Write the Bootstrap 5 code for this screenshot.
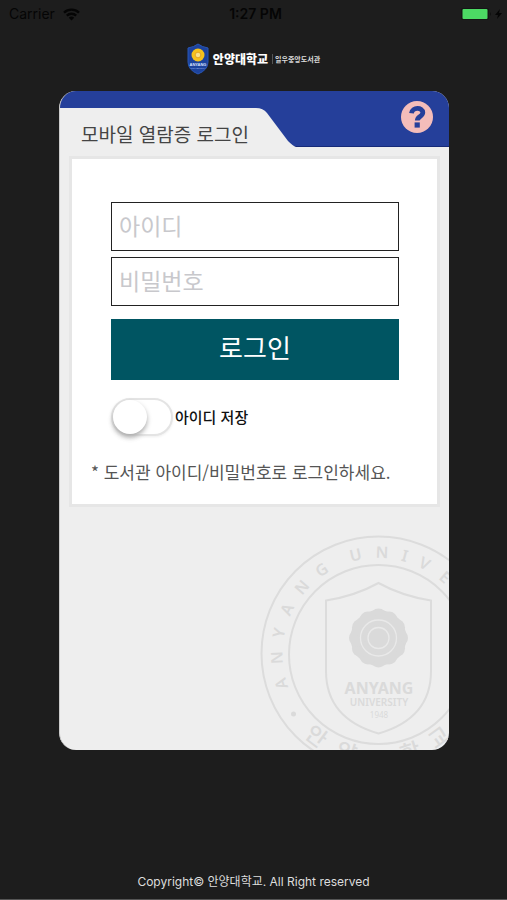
<!DOCTYPE html>
<html lang="ko">
<head>
<meta charset="utf-8">
<meta name="viewport" content="width=device-width, initial-scale=1">
<title>모바일 열람증 로그인</title>
<link href="https://cdn.jsdelivr.net/npm/bootstrap@5.3.0/dist/css/bootstrap.min.css" rel="stylesheet">
<style>
body{background:#1d1d1d;font-family:"Noto Sans","Noto Sans CJK KR",sans-serif;border-bottom:1px solid #555}
.statusbar{height:28px;padding:0 5px 0 9px;font:14px/28px Inter,sans-serif;color:#050505}
.statusbar .clock{font-weight:600;font-size:14px}
.brand{padding:15px 0 16px}
.brand .univ{font:900 12px/16px "Noto Sans CJK KR",sans-serif;color:#fff}
.brand .lib{font:700 7px/10px "Noto Sans CJK KR",sans-serif;color:#ddd;border-left:1px solid #555;padding-left:2px}
.frame{padding:0 58px 0 59px}
.pass{background:#eee;border-radius:17px;overflow:hidden;border-left:1px solid #ccc}
.pass-head{background:#253f9a;height:56px;border-bottom:1px solid #162a78}
.tab{background:#eee;margin-top:17px;height:39px;padding-left:21px;width:196px;white-space:nowrap}
.tab h1{font:400 19px/24px "Noto Sans CJK KR",sans-serif;color:#444;margin:0;padding-top:14px}
.slope{margin-top:17px}
.help{background:none;border:0;padding:10px 16px 0 0}
.panel{background:#fff;border:3px solid #e6e6e6;margin:9px 9px 0;padding:43px 38px 20px 39px}
.field{height:49px;border:1px solid #222;border-radius:0;font:23px/36px "Noto Sans CJK KR",sans-serif;padding:0 7px 4px;margin-bottom:6px}
.field::placeholder{color:#c8c8cc;opacity:1}
.login{height:61px;border-radius:0;background:#005562;color:#fff;font:26px/36px "Noto Sans CJK KR",sans-serif;margin-top:13px;border:0;padding:0 0 6px}
.login:hover{background:#00454f;color:#fff}
.save{margin-top:18px;gap:2px;font:500 15px/20px "Noto Sans CJK KR",sans-serif;color:#111}
.switch{appearance:none;width:62px;height:38px;border:2px solid #e4e4e4;border-radius:19px;background:#fff;margin:0;filter:drop-shadow(0 1px 1px #eee)}
.switch::before{content:"";display:block;width:34px;height:34px;border-radius:50%;background:#fff;box-shadow:0 3px 5px #aaa}
.switch:checked{background:#4cd964}
.switch:checked::before{margin-left:24px}
.note{font:17px/24px "Noto Sans CJK KR",sans-serif;color:#555;margin:24px -20px 0;white-space:nowrap}
.seal{margin-top:27px}
.copy{font:12px/18px Inter,"Noto Sans CJK KR",sans-serif;color:#ddd;padding-bottom:8px}
</style>
<script src="https://cdn.jsdelivr.net/npm/bootstrap@5.3.0/dist/js/bootstrap.bundle.min.js"></script>
</head>
<body class="d-flex flex-column min-vh-100">
<div class="statusbar row g-0 w-100">
  <div class="col d-flex align-items-center gap-2"><span>Carrier</span>
    <svg width="17" height="13" viewBox="0 0 17 13" fill="none" stroke="#050505" stroke-width="2.4"><path d="M1 4.6a11 11 0 0 1 15 0M3.8 7.6a7 7 0 0 1 9.4 0"/><path d="M8.500 12.500 5.800 9.700a4 4 0 0 1 5.400 0z" fill="#050505" stroke="none"/></svg>
  </div>
  <div class="col text-center clock">1:27 PM</div>
  <div class="col d-flex justify-content-end align-items-center">
    <svg width="42" height="14" viewBox="0 0 42 14"><rect x="1" y="1" width="28" height="12" rx="2" fill="#151515"/><rect x="2.500" y="2" width="25" height="10" rx="1" fill="#4cd964"/><path d="M30 5v4q2-2 0-4z" fill="#111"/><path d="m40 2-5 6h3l-1 4 5-6h-3z" fill="#050505"/></svg>
  </div>
</div>
<header class="brand d-flex justify-content-center align-items-center">
  <svg width="22" height="32" viewBox="0 0 22 32"><path d="M11 1Q15 4 21 5v14q0 8-10 12Q1 27 1 19V5q6-1 10-4z" fill="#1d439d" stroke="#2956b5"/><circle cx="11" cy="12" r="6.500" fill="#f5c21d"/><circle cx="11" cy="12" r="2.800" fill="#f7e28a" stroke="#e19a19" stroke-width=".8"/><text x="11" y="23" text-anchor="middle" font-family="Liberation Sans" font-weight="700" font-size="4" fill="#dbe4ff">ANYANG</text><text x="11" y="26" text-anchor="middle" font-family="Liberation Sans" font-size="2.500" fill="#9fb4e8">UNIVERSITY</text></svg>
  <span class="univ ms-1">안양대학교</span><span class="lib ms-1">일우중앙도서관</span>
</header>
<main class="frame">
  <div class="pass d-flex flex-column">
    <div class="pass-head d-flex">
      <div class="tab"><h1>모바일 열람증 로그인</h1></div>
      <svg class="slope flex-shrink-0" width="42" height="39" viewBox="0 0 42 39"><path d="M0 0Q7 0 11 5L32 33q5 5 8 6H0z" fill="#eee"/></svg>
      <button class="help ms-auto align-self-start" type="button" aria-label="도움말">
        <svg class="d-block" width="32" height="32" viewBox="0 0 32 32"><circle cx="16" cy="16" r="16" fill="#f4bdba"/><path d="M10.500 12.200C11.200 5.800 21.800 6.200 21.800 11.500C21.800 15.600 16.300 15.300 16.300 19.500" fill="none" stroke="#253f9a" stroke-width="4.800"/><rect x="13.600" y="21.400" width="5.200" height="5.200" fill="#253f9a"/></svg>
      </button>
    </div>
    <form class="panel">
      <label class="visually-hidden" for="uid">아이디</label>
      <input class="form-control field" id="uid" type="text" placeholder="아이디">
      <label class="visually-hidden" for="upw">비밀번호</label>
      <input class="form-control field mb-0" id="upw" type="password" placeholder="비밀번호">
      <button class="btn login w-100" type="submit">로그인</button>
      <div class="save d-flex align-items-center"><input class="switch" type="checkbox" role="switch" id="keep"><label for="keep">아이디 저장</label></div>
      <p class="note">* 도서관 아이디/비밀번호로 로그인하세요.</p>
    </form>
    <svg class="seal align-self-end d-block" width="189" height="216" viewBox="260 535 189 216" fill="none" stroke="#dcdcdc" stroke-width="2" aria-hidden="true">
      <circle cx="378.500" cy="654.500" r="117"/><circle cx="378.500" cy="655.500" r="89.500"/>
      <path d="M378.500 584Q402 597 431 601.500V672C431 708 408 726 378.500 734.500C349 726 326 708 326 672V601.500Q355 597 378.500 584z"/>
      <g fill="#dadada" stroke="none">
        <circle cx="378.500" cy="639" r="28"/>
        <circle cx="378.500" cy="618" r="8.500"/><circle cx="389" cy="621" r="8.500"/><circle cx="396.500" cy="628.500" r="8.500"/><circle cx="399.500" cy="639" r="8.500"/><circle cx="396.500" cy="649.500" r="8.500"/><circle cx="389" cy="657" r="8.500"/><circle cx="378.500" cy="660" r="8.500"/><circle cx="368" cy="657" r="8.500"/><circle cx="360.500" cy="649.500" r="8.500"/><circle cx="357.500" cy="639" r="8.500"/><circle cx="360.500" cy="628.500" r="8.500"/><circle cx="368" cy="621" r="8.500"/>
      </g>
      <g stroke="#e9e9e9" stroke-width="1.300"><circle cx="378.500" cy="639" r="18"/><circle cx="378.500" cy="639" r="10.500"/></g>
      <g fill="#dadada" stroke="none" text-anchor="middle" font-family="Noto Sans,sans-serif">
        <text x="379" y="695" font-size="16" font-weight="700">ANYANG</text>
        <text x="379" y="707" font-size="10" font-weight="600">UNIVERSITY</text>
        <text x="379" y="719" font-size="8">1948</text>
      </g>
      <g transform="translate(378.500 655)" fill="#dadada" stroke="none" text-anchor="middle" font-family="Noto Sans,sans-serif" font-size="16" font-weight="600">
        <text y="-96" transform="rotate(-107)">A</text><text y="-96" transform="rotate(-92)">N</text><text y="-96" transform="rotate(-78)">Y</text><text y="-96" transform="rotate(-64)">A</text><text y="-96" transform="rotate(-49)">N</text><text y="-96" transform="rotate(-34)">G</text><text y="-96" transform="rotate(-13)">U</text><text y="-96" transform="rotate(2)">N</text><text y="-96" transform="rotate(15)">I</text><text y="-96" transform="rotate(27)">V</text><text y="-96" transform="rotate(41)">E</text>
        <circle cx="-85" cy="60" r="2.500"/>
        <g font-family="Noto Sans CJK KR,sans-serif" font-size="22" font-weight="500"><text y="111" transform="rotate(37)">안</text><text y="111" transform="rotate(18)">양</text><text y="111" transform="rotate(-18)">학</text><text y="111" transform="rotate(-36)">교</text></g>
      </g>
    </svg>
  </div>
</main>
<footer class="copy text-center mt-auto">Copyright© 안양대학교. All Right reserved</footer>
</body>
</html>
